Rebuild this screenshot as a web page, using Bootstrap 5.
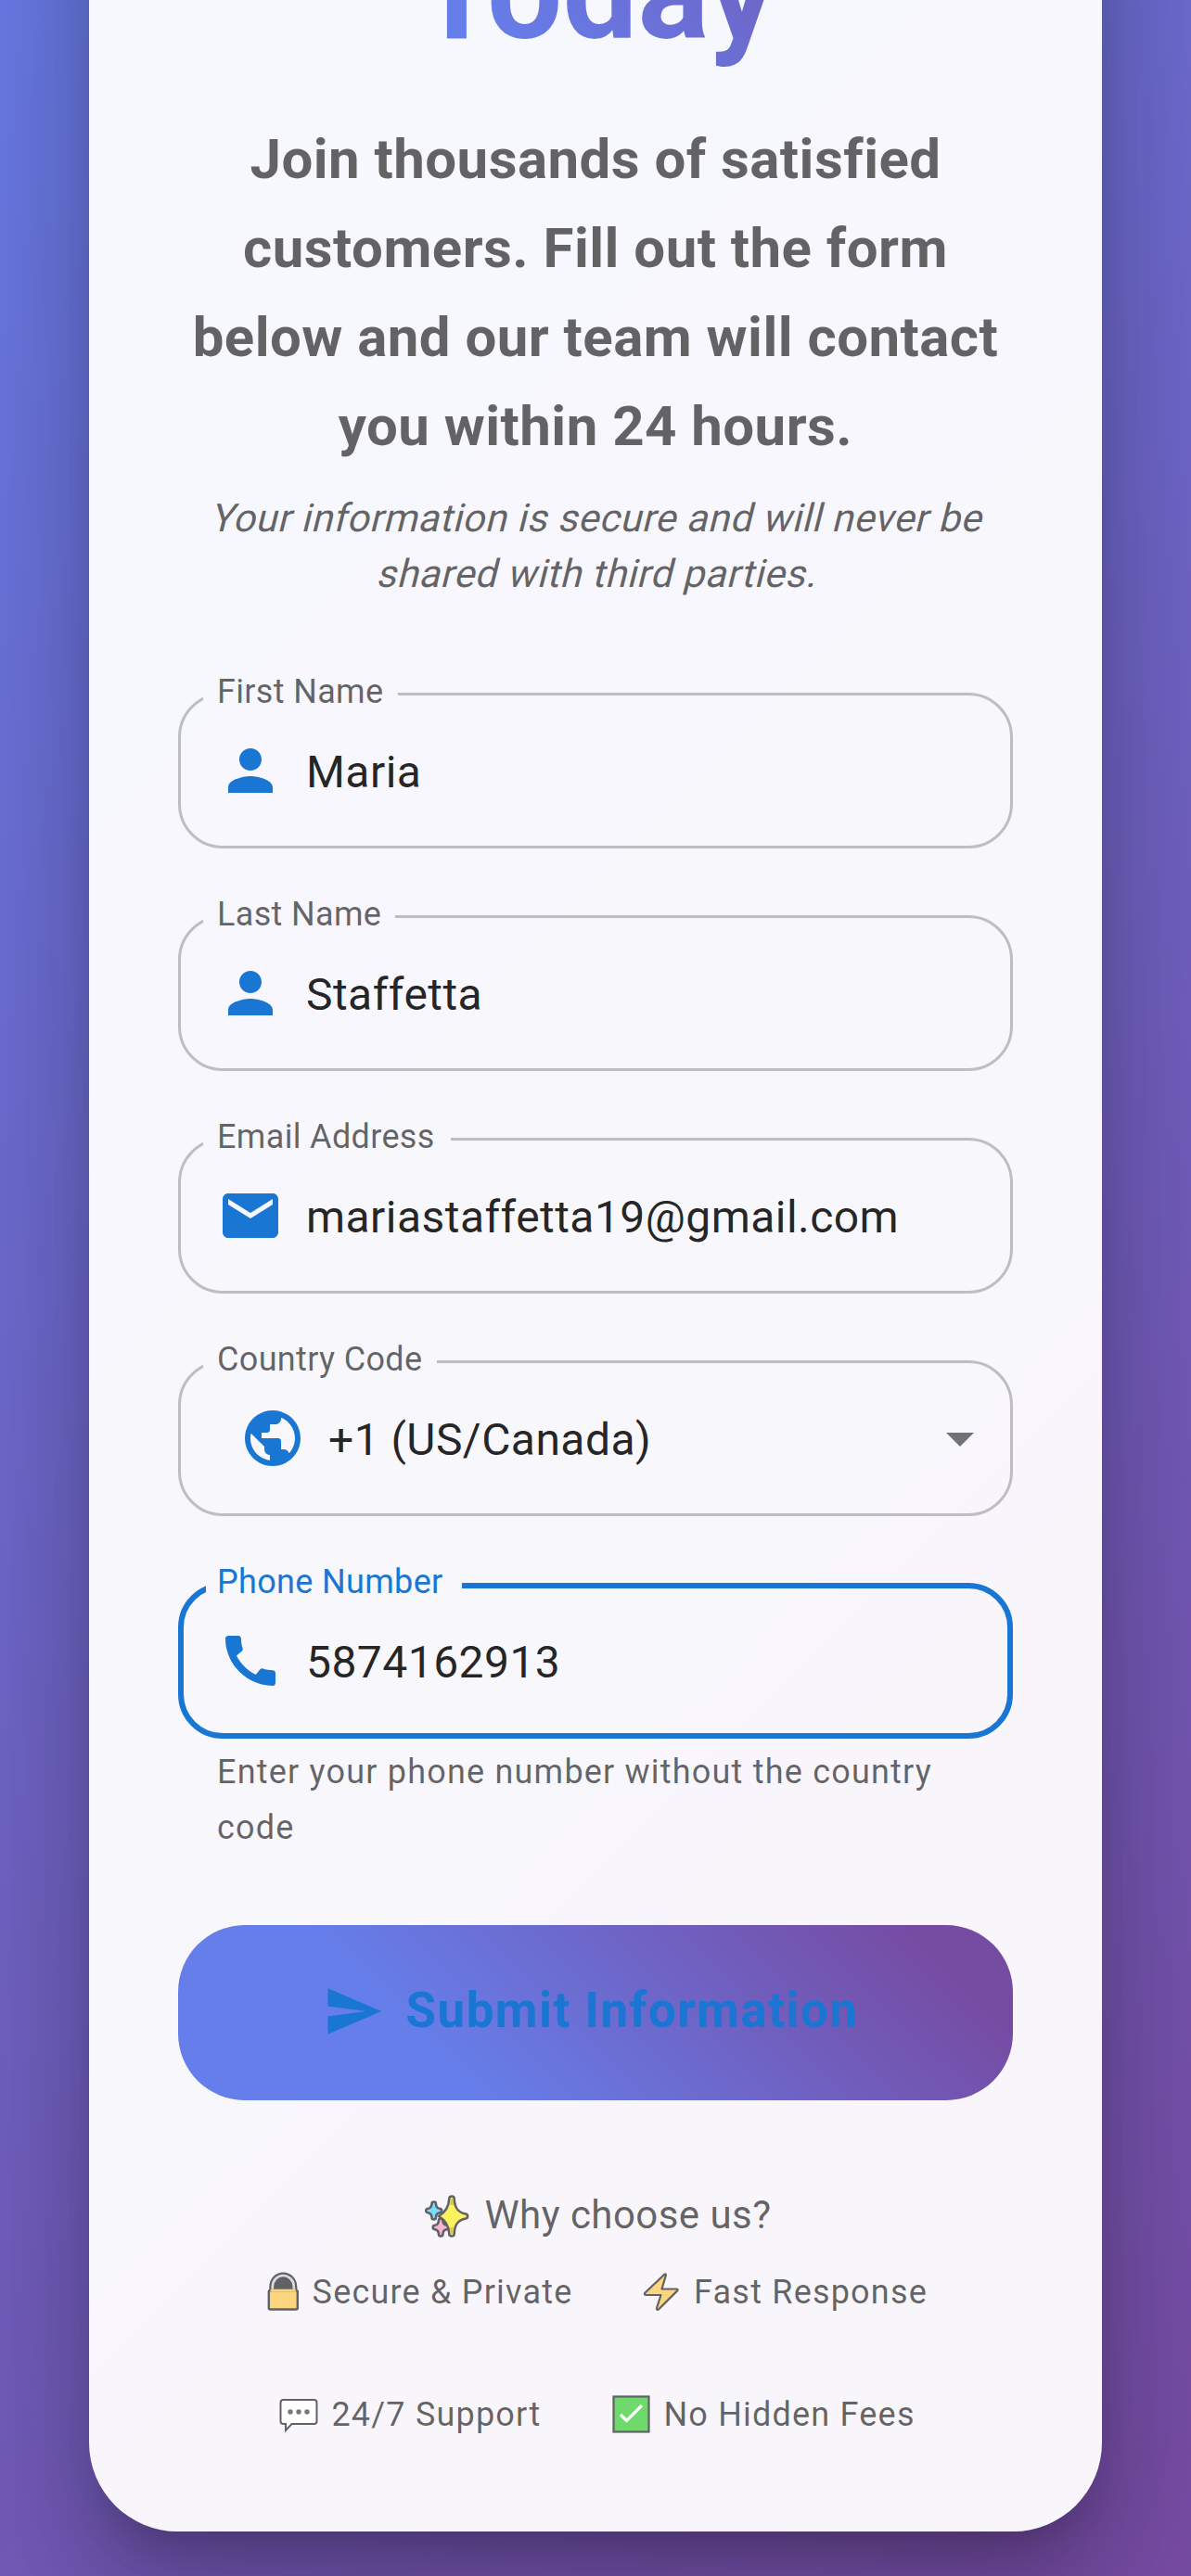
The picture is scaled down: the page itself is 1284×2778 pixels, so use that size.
<!DOCTYPE html>
<html lang="en">
<head>
<meta charset="utf-8">
<meta name="viewport" content="width=device-width, initial-scale=1">
<title>Today</title>
<link href="https://cdn.jsdelivr.net/npm/bootstrap@5.3.0/dist/css/bootstrap.min.css" rel="stylesheet">
<style>
body{font-family:Roboto,"Liberation Sans",sans-serif;margin:0;color:rgba(0,0,0,.87)}
.viewport-frame{height:2778px}
.page-bg{height:3180px;padding:48px 96px;flex:none;background:linear-gradient(135deg,#667eea 0%,#764ba2 100%)}
.form-panel{height:3084px;padding:0 96px 96px;border-radius:96px;background:rgba(255,255,255,.95);
 box-shadow:0 33px 45px -21px rgba(0,0,0,.2),0 72px 114px 9px rgba(0,0,0,.14),0 27px 138px 24px rgba(0,0,0,.12)}
.headline{font-size:144px;line-height:168px;font-weight:700;margin-bottom:48px;background:linear-gradient(45deg,#667eea 30%,#764ba2 90%) bottom/100% 336px;-webkit-background-clip:text;background-clip:text;color:transparent}
.intro{font-size:60px;line-height:96px;font-weight:700;letter-spacing:.0075em;color:rgba(0,0,0,.6);margin:0 -20px 21px}
.fine-note{font-size:42px;line-height:60px;letter-spacing:.01071em;color:rgba(0,0,0,.6);margin-bottom:98px}
.fine-note span{display:inline-block;vertical-align:top;transform:skewX(-14deg);transform-origin:50% 74%}
.outlined{height:183px;margin-top:-15px;border:3px solid rgba(0,0,0,.23);border-radius:48px;padding:0 24px 15px}
.outlined legend{float:none;height:33px;margin:0;padding:0 0 0 15px;font-size:36px;line-height:29px;letter-spacing:.00938em;color:rgba(0,0,0,.6);white-space:nowrap}
.outlined .field-body{height:132px;padding-left:15px}
.outlined .field-body.inset{padding-left:39px;padding-right:0}
.outlined .value{font-size:48px;line-height:69px;letter-spacing:.00938em;margin-left:24px;padding-top:2px}
.outlined.active{border:6px solid #1976d2;padding:0 24px 12px}
.outlined.active legend{height:36px;padding-left:12px;color:#1976d2}
.outlined.active .field-body{height:126px;padding-left:12px}
.w-first{width:210px!important}.w-last{width:207px!important}.w-mail{width:267px!important}.w-code{width:252px!important}.w-phone{width:276px!important}
.fields{gap:72px}
.ico{width:72px;height:72px;fill:#1976d2;flex:none}
.ico.caret{fill:rgba(0,0,0,.54);margin-left:auto;margin-right:-6px}
.helper{font-size:36px;line-height:60px;letter-spacing:.03333em;color:rgba(0,0,0,.6);margin:6px 42px 75px}
.send-btn{height:189px;border:0;border-radius:72px;padding:0 0 3px 1px;background:linear-gradient(45deg,#667eea 30%,#764ba2 90%);color:#1976d2;font-size:52.8px;font-weight:700;letter-spacing:.02857em}
.send-btn svg{width:66px;height:66px;fill:#1976d2;margin:0 24px 0 -12px}
.why{font-size:42px;line-height:60px;letter-spacing:.01071em;color:rgba(0,0,0,.6);padding-left:5px;margin-top:94px;margin-bottom:23px}
.perks{gap:72px;font-size:36px;line-height:60px;letter-spacing:.03333em;color:rgba(0,0,0,.6)}
.emo{display:inline-block;vertical-align:top;height:60px}
</style>
</head>
<body>
<div class="viewport-frame d-flex align-items-end overflow-hidden">
<div class="page-bg w-100">
<main class="form-panel d-flex flex-column justify-content-end">
 <h1 class="headline text-center">Today</h1>
 <h2 class="intro text-center">Join thousands of satisfied<br>customers. Fill out the form<br>below and our team will contact<br>you within 24 hours.</h2>
 <p class="fine-note text-center"><span>Your information is secure and will never be</span><br><span>shared with third parties.</span></p>
 <form class="d-flex flex-column">
  <div class="fields d-flex flex-column">
   <fieldset class="outlined">
    <legend class="w-first">First Name</legend>
    <div class="field-body d-flex align-items-center"><svg class="ico" viewBox="0 0 24 24"><path d="M12 12c2.21 0 4-1.79 4-4s-1.79-4-4-4-4 1.79-4 4 1.79 4 4 4m0 2c-2.67 0-8 1.34-8 4v2h16v-2c0-2.66-5.33-4-8-4"/></svg><span class="value">Maria</span></div>
   </fieldset>
   <fieldset class="outlined">
    <legend class="w-last">Last Name</legend>
    <div class="field-body d-flex align-items-center"><svg class="ico" viewBox="0 0 24 24"><path d="M12 12c2.21 0 4-1.79 4-4s-1.79-4-4-4-4 1.79-4 4 1.79 4 4 4m0 2c-2.67 0-8 1.34-8 4v2h16v-2c0-2.66-5.33-4-8-4"/></svg><span class="value">Staffetta</span></div>
   </fieldset>
   <fieldset class="outlined">
    <legend class="w-mail">Email Address</legend>
    <div class="field-body d-flex align-items-center"><svg class="ico" viewBox="0 0 24 24"><path d="M20 4H4c-1.1 0-1.99.9-1.99 2L2 18c0 1.1.9 2 2 2h16c1.1 0 2-.9 2-2V6c0-1.1-.9-2-2-2m0 4-8 5-8-5V6l8 5 8-5z"/></svg><span class="value">mariastaffetta19@gmail.com</span></div>
   </fieldset>
   <fieldset class="outlined">
    <legend class="w-code">Country Code</legend>
    <div class="field-body inset d-flex align-items-center"><svg class="ico" viewBox="0 0 24 24"><path d="M12 2C6.48 2 2 6.48 2 12s4.48 10 10 10 10-4.48 10-10S17.52 2 12 2m-1 17.93c-3.95-.49-7-3.85-7-7.93 0-.62.08-1.21.21-1.79L9 15v1c0 1.1.9 2 2 2zm6.9-2.54c-.26-.81-1-1.39-1.9-1.39h-1v-3c0-.55-.45-1-1-1H8v-2h2c.55 0 1-.45 1-1V7h2c1.1 0 2-.9 2-2v-.41c2.93 1.19 5 4.06 5 7.41 0 2.08-.8 3.97-2.1 5.39"/></svg><span class="value">+1 (US/Canada)</span><svg class="ico caret" viewBox="0 0 24 24"><path d="m7 10 5 5 5-5z"/></svg></div>
   </fieldset>
   <fieldset class="outlined active">
    <legend class="w-phone">Phone Number</legend>
    <div class="field-body d-flex align-items-center"><svg class="ico" viewBox="0 0 24 24"><path d="M20.01 15.38c-1.23 0-2.42-.2-3.53-.56-.35-.12-.74-.03-1.01.24l-1.57 1.97c-2.83-1.35-5.48-3.9-6.89-6.83l1.95-1.66c.27-.28.35-.67.24-1.02-.37-1.11-.56-2.3-.56-3.53 0-.54-.45-.99-.99-.99H4.19C3.65 3 3 3.24 3 3.99 3 13.28 10.73 21 20.01 21c.71 0 .99-.63.99-1.18v-3.45c0-.54-.45-.99-.99-.99"/></svg><span class="value">5874162913</span></div>
   </fieldset>
  </div>
  <div class="helper">Enter your phone number without the country code</div>
  <button type="button" class="send-btn btn w-100 d-flex align-items-center justify-content-center"><svg viewBox="0 0 24 24"><path d="M2.01 21 23 12 2.01 3 2 10l15 2-15 2z"/></svg>Submit Information</button>
 </form>
 <p class="why text-center"><svg class="emo" width="54" height="60" viewBox="0 0 54 60"><g stroke="#626165" stroke-width="2.6" stroke-linejoin="round"><path fill="#7bdcfb" d="M7.500 17.500q0-2 2.200-2t2.200 2q.2 4.600 4 5.300 2.300.2 2.300 2.200t-2.300 2.200q-3.800.7-4 5.300 0 2-2.200 2t-2.200-2q-.2-4.600-4-5.300-2.300-.2-2.300-2.200t2.300-2.200q3.800-.7 4-5.300z"/><path fill="#626165" d="M17 34l11 0 0 12q-3-6-8-8z"/><path fill="#f7b4d4" d="M15 35.500q0-2 2.200-2t2.200 2q.2 4.600 4 5.300 2.300.2 2.300 2.200t-2.300 2.200q-3.800.7-4 5.300 0 2-2.200 2t-2.200-2q-.2-4.600-4-5.300-2.300-.2-2.300-2.200t2.300-2.200q3.800-.7 4-5.300z"/><path fill="#fcf260" d="M26.300 12q0-2.500 2.700-2.500t2.700 2.500c.3 10 4 15 12.500 16.500q2 .5 2 2.500t-2 2.500c-8.500 1.500-12.200 6.500-12.500 16.500q0 2.500-2.700 2.500t-2.700-2.500c-.3-8-3-14-11.300-19 8.300-5 11-11 11.300-19z"/></g><path d="M29 12v7M29 43v7" stroke="#d2c850" stroke-width="3"/></svg> Why choose us?</p>
 <div class="perks d-flex flex-wrap justify-content-center">
  <span><svg class="emo" width="42.5" height="60" viewBox="-.8 0 42.5 60"><path d="M7.500 27v-3a13 14 0 0 1 26 0v3" fill="#626165"/><path d="M9 28v-4a11.500 12 0 0 1 23 0v4" fill="none" stroke="#626165" stroke-width="7"/><path d="M9 28v-4a11.500 12 0 0 1 23 0v4" fill="none" stroke="#dcdcdf" stroke-width="2.600"/><rect x="5" y="28" width="31" height="20.500" rx="1.500" fill="#fcd57f" stroke="#626165" stroke-width="2.400"/><path d="M7 28h27" stroke="#fcd57f" stroke-width="2.600"/></svg> Secure &amp; Private</span>
  <span><svg class="emo" width="48.5" height="60" viewBox="-3 0 48.5 60"><path d="M24.300 10.800q2-1.200 1.500 1.200l-4.300 14.500h16q2 .3.700 1.900L18 48.500q-2.400 1-2-1.500l4.500-14H4q-2-.5-.5-2.500z" fill="#fcd57f" stroke="#626165" stroke-width="2.200" stroke-linejoin="round"/></svg> Fast Response</span>
  <span><svg class="emo" width="50" height="60" viewBox="-4.500 0 50 60"><path d="M4 14h33q3 0 3 3v20q0 3-3 3H13l-6.500 7v-7H4q-3 0-3-3V17q0-3 3-3z" fill="#fff" stroke="#626165" stroke-width="2"/><g fill="#77767a"><circle cx="11.500" cy="27" r="2.700"/><circle cx="20.500" cy="27" r="2.700"/><circle cx="29.500" cy="27" r="2.700"/></g></svg> 24/7 Support</span>
  <span><svg class="emo" width="50" height="60" viewBox="-5 0 50 60"><rect x="1.500" y="10.500" width="38" height="38" fill="#6fd96c" stroke="#626165" stroke-width="2.200"/><path d="M9 30l6.500 6.500L32 20" fill="none" stroke="#fff" stroke-width="3.200"/></svg> No Hidden Fees</span>
 </div>
</main>
</div>
</div>
<script src="https://cdn.jsdelivr.net/npm/bootstrap@5.3.0/dist/js/bootstrap.bundle.min.js"></script>
</body>
</html>
